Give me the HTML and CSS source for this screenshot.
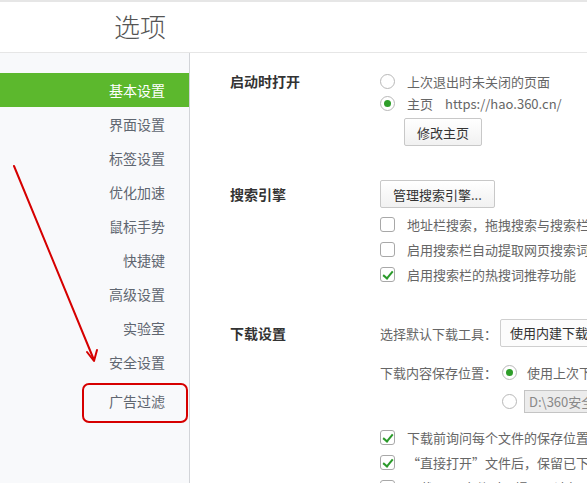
FILE: index.html
```html
<!DOCTYPE html>
<html lang="zh-CN">
<head>
    <meta charset="UTF-8">
    <title>选项</title>
    <link rel="stylesheet" href="styles.css">
</head>
<body>
    <header class="top">
        <h1 class="title">选项</h1>
    </header>

    <div class="layout">
        <aside class="sidebar">
            <ul>
                <li class="active">基本设置</li>
                <li>界面设置</li>
                <li>标签设置</li>
                <li>优化加速</li>
                <li>鼠标手势</li>
                <li>快捷键</li>
                <li>高级设置</li>
                <li>实验室</li>
                <li>安全设置</li>
                <li class="adblock">广告过滤</li>
            </ul>
        </aside>

        <main class="content">
            <section class="group">
                <h2 class="group-title line22">启动时打开</h2>
                <div class="group-body">
                    <div class="row"><span class="radio"></span>上次退出时未关闭的页面</div>
                    <div class="row"><span class="radio on"></span>主页<span class="url">https://hao.360.cn/</span></div>
                    <button class="btn btn-home">修改主页</button>
                </div>
            </section>

            <section class="group gap2">
                <h2 class="group-title line28">搜索引擎</h2>
                <div class="group-body">
                    <button class="btn btn-search">管理搜索引擎...</button>
                    <div class="check-list">
                        <div class="row crow"><span class="check"></span>地址栏搜索，拖拽搜索与搜索栏使用相同的搜索引擎</div>
                        <div class="row crow"><span class="check"></span>启用搜索栏自动提取网页搜索词</div>
                        <div class="row crow"><span class="check on"></span>启用搜索栏的热搜词推荐功能</div>
                    </div>
                </div>
            </section>

            <section class="group gap3">
                <h2 class="group-title line28">下载设置</h2>
                <div class="group-body">
                    <div class="row row-select">
                        <span class="field-label">选择默认下载工具：</span>
                        <span class="select">使用内建下载工具</span>
                    </div>
                    <div class="row row-save">
                        <span class="field-label">下载内容保存位置：</span>
                        <span class="radio on"></span>使用上次下载目录
                    </div>
                    <div class="row row-path">
                        <span class="radio"></span>
                        <span class="path">D:\360安全浏览器下载</span>
                    </div>
                    <div class="check-list dl-checks">
                        <div class="row crow"><span class="check on"></span>下载前询问每个文件的保存位置</div>
                        <div class="row crow"><span class="check on"></span>“直接打开”文件后，保留已下载的文件</div>
                        <div class="row crow"><span class="check"></span>下载 .exe 文件时，提示：请勿运行来源不明的程序</div>
                    </div>
                </div>
            </section>
        </main>
    </div>

    <!-- 红色标注 -->
    <svg class="marks" width="587" height="483" viewBox="0 0 587 483">
        <g fill="none" stroke="#d60000" stroke-width="2" stroke-linecap="round" stroke-linejoin="round">
            <path d="M14 166 L94 360"/>
            <path d="M87 352 L94 361 L97 350"/>
            <rect x="83" y="384" width="104" height="38" rx="6"/>
        </g>
    </svg>
</body>
</html>
```

FILE: styles.css
```css
* {
    box-sizing: border-box;
    margin: 0;
    padding: 0;
}

body {
    width: 587px;
    height: 483px;
    overflow: hidden;
    background-color: #fff;
    font-family: "Noto Sans CJK SC", "Microsoft YaHei", sans-serif;
    font-size: 13px;
    color: #666;
    position: relative;
}

.top {
    height: 53px;
    border-top: 2px solid #e6e6e6;
    border-bottom: 1px solid #e6e6e6;
}

.title {
    font-size: 26px;
    font-weight: 300;
    color: #555;
    line-height: 48px;
    padding-left: 114px;
}

.layout {
    display: flex;
    height: 430px;
}

/* 侧边栏 */
.sidebar {
    width: 190px;
    flex-shrink: 0;
    background-color: #f8f9fb;
    border-right: 1px solid #d2d4d8;
    padding-top: 20px;
}

.sidebar ul {
    list-style: none;
}

.sidebar li {
    height: 34px;
    line-height: 34px;
    text-align: right;
    padding-right: 24px;
    font-size: 14px;
    color: #5f6670;
}

.sidebar li.active {
    background-color: #5cb82d;
    color: #fff;
}

.sidebar li.adblock {
    margin-top: 5px;
}

/* 内容 */
.content {
    flex: 1;
    padding: 17px 0 0 40px;
    white-space: nowrap;
    overflow: hidden;
}

.group {
    display: flex;
}

.gap2 {
    margin-top: 34px;
}

.gap3 {
    margin-top: 32px;
}

.group-title {
    width: 150px;
    flex-shrink: 0;
    font-size: 14px;
    font-weight: bold;
    color: #333;
}

.line22 {
    line-height: 22px;
}

.line28 {
    line-height: 28px;
}

.group-body {
    display: flex;
    flex-direction: column;
    align-items: flex-start;
}

.row {
    display: flex;
    align-items: center;
    height: 22px;
}

.crow {
    height: 25px;
}

.url {
    margin-left: 12px;
}

.radio {
    width: 15px;
    height: 15px;
    border: 1px solid #b8b8b8;
    border-radius: 50%;
    background: #fff;
    margin-right: 12px;
    position: relative;
    flex-shrink: 0;
}

.radio.on::after {
    content: "";
    position: absolute;
    left: 3px;
    top: 3px;
    width: 7px;
    height: 7px;
    border-radius: 50%;
    background-color: #2f9e2a;
}

.check {
    width: 15px;
    height: 15px;
    border: 1px solid #a8a8a8;
    border-radius: 3px;
    background: #fff;
    margin-right: 12px;
    position: relative;
    flex-shrink: 0;
}

.check.on::after {
    content: "";
    position: absolute;
    left: 4px;
    top: 1px;
    width: 4px;
    height: 8px;
    border-right: 2px solid #2a9a2a;
    border-bottom: 2px solid #2a9a2a;
    transform: rotate(40deg);
}

.btn {
    height: 28px;
    padding: 0 12px;
    border: 1px solid #c8c8c8;
    border-radius: 2px;
    background: linear-gradient(#fff, #f1f1f1);
    font-family: inherit;
    font-size: 13px;
    color: #333;
}

.btn-home {
    margin: 4px 0 0 24px;
}

.check-list {
    margin-top: 4px;
}

.field-label {
    width: 120px;
    flex-shrink: 0;
}

.row-select {
    height: 28px;
}

.select {
    height: 28px;
    line-height: 26px;
    padding: 0 9px;
    width: 160px;
    border: 1px solid #cfcfcf;
    border-radius: 2px;
    background: #fcfcfc;
    color: #333;
    font-size: 13px;
}

.row-save {
    margin-top: 14px;
}

.row-save .radio {
    margin-left: 2px;
    margin-right: 10px;
}

.row-path {
    margin-top: 6px;
    height: 24px;
    padding-left: 122px;
}

.row-path .radio {
    margin-right: 7px;
}

.path {
    height: 23px;
    line-height: 21px;
    padding: 0 4px;
    border: 1px solid #c4c4c4;
    background: #ececec;
    color: #888;
    width: 160px;
}

.dl-checks {
    margin-top: 12px;
}

.marks {
    position: absolute;
    left: 0;
    top: 0;
    pointer-events: none;
}
```
